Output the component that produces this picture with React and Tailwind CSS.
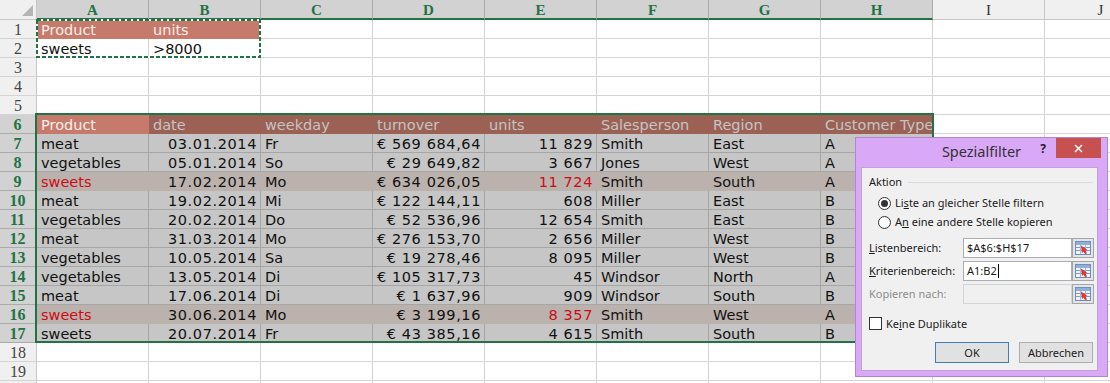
import React from 'react';

const COLS = ['A', 'B', 'C', 'D', 'E', 'F', 'G', 'H', 'I', 'J'];
const SELECTED_COLS = 8; // A..H

// Sales table A7:H17
const DATA = [
  ['meat', '03.01.2014', 'Fr', '€ 569 684,64', '11 829', 'Smith', 'East', 'A'],
  ['vegetables', '05.01.2014', 'So', '€ 29 649,82', '3 667', 'Jones', 'West', 'A'],
  ['sweets', '17.02.2014', 'Mo', '€ 634 026,05', '11 724', 'Smith', 'South', 'A'],
  ['meat', '19.02.2014', 'Mi', '€ 122 144,11', '608', 'Miller', 'East', 'B'],
  ['vegetables', '20.02.2014', 'Do', '€ 52 536,96', '12 654', 'Smith', 'East', 'B'],
  ['meat', '31.03.2014', 'Mo', '€ 276 153,70', '2 656', 'Miller', 'West', 'B'],
  ['vegetables', '10.05.2014', 'Sa', '€ 19 278,46', '8 095', 'Miller', 'West', 'B'],
  ['vegetables', '13.05.2014', 'Di', '€ 105 317,73', '45', 'Windsor', 'North', 'A'],
  ['meat', '17.06.2014', 'Di', '€ 1 637,96', '909', 'Windsor', 'South', 'B'],
  ['sweets', '30.06.2014', 'Mo', '€ 3 199,16', '8 357', 'Smith', 'West', 'A'],
  ['sweets', '20.07.2014', 'Fr', '€ 43 385,16', '4 615', 'Smith', 'South', 'B'],
];
const HEADERS = ['Product', 'date', 'weekday', 'turnover', 'units', 'Salesperson', 'Region', 'Customer Type'];
const RIGHT_ALIGNED = [false, true, false, true, true, false, false, false];
const MATCH_ROWS = [9, 16];
const VISIBLE_ROWS = 19;

const KIND = {
  blank: 'border-[#d4d4d4]',
  salmon: 'bg-[#c57a6b] border-[#c57a6b]',
  hdr: 'bg-[#9c6155] border-[#9c6155]',
  sel: 'bg-[#c6c6c6] border-[#a6a6a6]',
  pink: 'bg-[#bcb2ad] border-[#bcb2ad]',
};

const INK = {
  black: 'text-[#111111]',
  red: 'text-[#cc0b16]',
  light: 'text-[#fbeeea]',
  grey: 'text-[#c4c4c4]',
};

function Cell({ text = '', kind = 'blank', right = false, ink = 'black' }) {
  const align = right ? 'text-right pr-[3px] tracking-[0.6px]' : 'text-left pl-[4px]';
  return (
    <div
      className={`h-[19px] border-r border-b whitespace-nowrap overflow-visible text-[14.5px] leading-[20px] ${KIND[kind]} ${INK[ink]} ${align}`}
    >
      {text}
    </div>
  );
}

function buildRow(r) {
  const cells = [];
  for (let c = 0; c < COLS.length; c++) {
    let props = {};
    if (r === 1 && c < 2) props = { text: c === 0 ? 'Product' : 'units', kind: 'salmon', ink: 'light' };
    else if (r === 2 && c < 2) props = { text: c === 0 ? 'sweets' : '>8000' };
    else if (r === 6 && c < SELECTED_COLS)
      props = c === 0
        ? { text: HEADERS[0], kind: 'salmon', ink: 'light' }
        : { text: HEADERS[c], kind: 'hdr', ink: 'grey' };
    else if (r >= 7 && r <= 17 && c < SELECTED_COLS) {
      const match = MATCH_ROWS.includes(r);
      const red = match && (c === 0 || c === 4);
      props = {
        text: DATA[r - 7][c],
        kind: match ? 'pink' : 'sel',
        right: RIGHT_ALIGNED[c],
        ink: red ? 'red' : 'black',
      };
    }
    cells.push(<Cell key={`${r}-${c}`} {...props} />);
  }
  return cells;
}

function RowHeader({ n, label = n }) {
  const active = n >= 6 && n <= 17;
  return (
    <div
      className={`h-[19px] text-center font-['Liberation_Serif',serif] text-[16px] leading-[20px] ${
        active
          ? 'bg-[#d2d2d2] border-r-2 border-r-[#217346] border-b border-b-[#ababab] text-[#217346] font-bold'
          : 'bg-[#f0f0f0] border-r border-r-[#c6c6c6] border-b border-b-[#d4d4d4] text-[#444444]'
      }`}
    >
      {label}
    </div>
  );
}

function ColHeader({ label, active }) {
  return (
    <div
      className={`h-[20px] text-center font-['Liberation_Serif',serif] text-[15px] leading-[20px] ${
        active
          ? 'bg-[#d2d2d2] border-r border-r-[#ababab] border-b-2 border-b-[#217346] text-[#217346] font-bold'
          : 'bg-[#f0f0f0] border-r border-r-[#c6c6c6] border-b border-b-[#c6c6c6] text-[#333333]'
      }`}
    >
      {label}
    </div>
  );
}

function RangeIcon() {
  return (
    <svg width="16" height="14" viewBox="0 0 16 14">
      <rect x="0.5" y="0.5" width="15" height="13" fill="#eef3fa" stroke="#6d8fc0" />
      <rect x="1" y="1" width="14" height="3" fill="#8fb0dc" />
      <line x1="1" y1="6.5" x2="15" y2="6.5" stroke="#7d9ccb" />
      <line x1="1" y1="9.5" x2="15" y2="9.5" stroke="#7d9ccb" />
      <line x1="5.5" y1="4" x2="5.5" y2="13" stroke="#9fb8dc" />
      <line x1="10.5" y1="4" x2="10.5" y2="13" stroke="#9fb8dc" />
      <polygon points="6,4.5 12.5,9 10.5,9.5 12,12.5 10,13 8.5,10.5 7,12" fill="#e2352b" />
    </svg>
  );
}

function Radio({ checked, children, className = '' }) {
  return (
    <div className={`h-[16px] flex items-center pl-[16px] ${className}`}>
      <div className="w-[13px] h-[13px] rounded-full border border-[#333333] bg-white flex items-center justify-center">
        {checked && <div className="w-[7px] h-[7px] rounded-full bg-[#333333]" />}
      </div>
      <span className="ml-[4px] leading-[16px]">{children}</span>
    </div>
  );
}

function RangeRow({ label, value, cursor, disabled, className = '' }) {
  return (
    <div className={`h-[20px] flex items-center pl-[7px] ${className}`}>
      <span className={`w-[94px] leading-[16px] ${disabled ? 'text-[#8d8d8d]' : ''}`}>{label}</span>
      <div
        className={`w-[109px] h-[20px] border flex items-center pl-[3px] ${
          disabled ? 'border-[#d4d4d4] bg-[#f0f0f0]' : 'border-[#abadb3] bg-white'
        }`}
      >
        <span className="leading-[16px]">{value}</span>
        {cursor && <span className="ml-px w-px h-[14px] bg-black" />}
      </div>
      <div className="w-[22px] h-[20px] border border-[#a5a5a5] bg-[#e4e4e4] flex items-center justify-center">
        <RangeIcon />
      </div>
    </div>
  );
}

function Dialog() {
  return (
    <div className="absolute left-[855px] top-[137px] w-[253px] h-[240px] bg-[#d9a8f7] border border-[#b583d6] font-['Noto_Sans',sans-serif] text-[11px] text-[#1a1a1a]">
      <div className="relative h-[30px]">
        <div className="pt-[3px] text-center text-[14.5px] leading-[20px] text-[#333333]">Spezialfilter</div>
        <div className="absolute right-[6px] top-0 flex items-start">
          <span className="mt-[4px] mr-[10px] text-[12px] font-bold leading-[14px] text-[#222222]">?</span>
          <div className="w-[45px] h-[20px] bg-[#c75050] flex items-center justify-center">
            <svg width="9" height="9" viewBox="0 0 9 9">
              <line x1="1" y1="1" x2="8" y2="8" stroke="#ffffff" strokeWidth="1.4" />
              <line x1="8" y1="1" x2="1" y2="8" stroke="#ffffff" strokeWidth="1.4" />
            </svg>
          </div>
        </div>
      </div>
      <div className="ml-[6px] w-[235px] h-[202px] bg-[#f0f0f0] ring-1 ring-[#c59fdd] flex flex-col">
        <div className="mt-[6px] h-[16px] flex items-center pl-[7px] pr-[4px]">
          <span className="leading-[16px]">Aktion</span>
          <div className="ml-[6px] flex-1 h-px bg-[#dcdcdc]" />
        </div>
        <Radio checked className="mt-[5px]">
          Li<u>s</u>te an gleicher Stelle filtern
        </Radio>
        <Radio className="mt-[3px]">
          A<u>n</u> eine andere Stelle kopieren
        </Radio>
        <RangeRow
          className="mt-[8px]"
          label={<><u>L</u>istenbereich:</>}
          value="$A$6:$H$17"
        />
        <RangeRow
          className="mt-[3px]"
          label={<><u>K</u>riterienbereich:</>}
          value="A1:B2"
          cursor
        />
        <RangeRow className="mt-[3px]" label="Kopieren nach:" value="" disabled />
        <div className="mt-[13px] h-[13px] flex items-center pl-[7px]">
          <div className="w-[13px] h-[13px] border border-[#333333] bg-white" />
          <span className="ml-[4px] leading-[16px]">
            Ke<u>i</u>ne Duplikate
          </span>
        </div>
        <div className="mt-[12px] flex pl-[73px] gap-[10px]">
          <div className="w-[74px] h-[21px] bg-[#e1e1e1] border border-[#3c7fb1] flex items-center justify-center leading-[16px]">
            OK
          </div>
          <div className="w-[74px] h-[21px] bg-[#e1e1e1] border border-[#adadad] flex items-center justify-center leading-[16px]">
            Abbrechen
          </div>
        </div>
      </div>
    </div>
  );
}

export default function App() {
  const rows = [];
  for (let r = 1; r <= VISIBLE_ROWS + 1; r++) {
    // the last row only peeks in at the bottom edge, so its number stays out of view
    rows.push(<RowHeader key={`h${r}`} n={r} label={r <= VISIBLE_ROWS ? r : ''} />);
    rows.push(...buildRow(r));
  }

  return (
    <div className="relative w-[1110px] h-[383px] overflow-hidden bg-white font-['DejaVu_Sans',sans-serif]">
      <div className="grid grid-cols-[37px_repeat(10,112px)] grid-rows-[20px_repeat(20,19px)]">
        <div className="h-[20px] bg-[#f0f0f0] border-r border-b border-[#c6c6c6]">
          <svg width="36" height="19" viewBox="0 0 36 19" className="block">
            <polygon points="33,5 33,16 22,16" fill="#b5b5b5" />
          </svg>
        </div>
        {COLS.map((c, i) => (
          <ColHeader key={c} label={c} active={i < SELECTED_COLS} />
        ))}
        {rows}
      </div>

      {/* copy marquee around the criteria range A1:B2 */}
      <svg className="absolute left-[36px] top-[19px]" width="225" height="39" viewBox="0 0 225 39">
        <rect x="1" y="1" width="223" height="37" fill="none" stroke="#ffffff" strokeWidth="2" />
        <rect x="1" y="1" width="223" height="37" fill="none" stroke="#217346" strokeWidth="2" strokeDasharray="4 2" />
      </svg>

      {/* selection outline around the list range A6:H17 */}
      <div className="absolute left-[35px] top-[113px] w-[899px] h-[230px] border-2 border-[#217346]" />

      <Dialog />
    </div>
  );
}
